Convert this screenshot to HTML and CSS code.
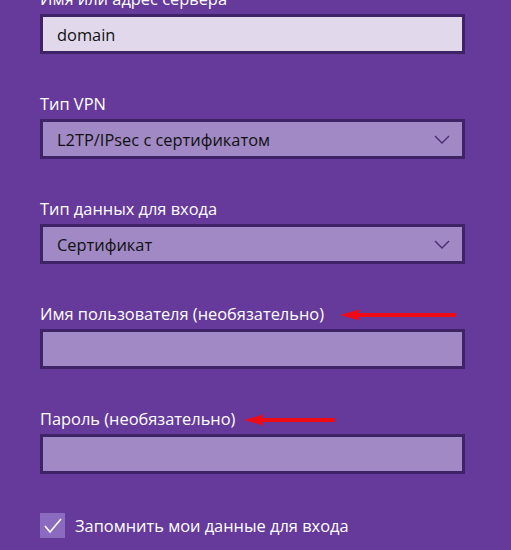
FILE: index.html
```html
<!DOCTYPE html>
<html lang="ru">

<head>
  <meta charset="UTF-8" />
  <meta name="viewport" content="width=device-width, initial-scale=1.0" />
  <title>Добавить VPN-подключение</title>
  <link rel="stylesheet" href="styles.css">
</head>

<body>
  <form class="vpn-form">
    <div class="field">
      <label class="label">Имя или адрес сервера</label>
      <div class="box box-light">domain</div>
    </div>

    <div class="field">
      <label class="label">Тип VPN</label>
      <div class="box box-select">
        <span>L2TP/IPsec с сертификатом</span>
        <svg class="chevron" width="16" height="9" viewBox="0 0 16 9">
          <path d="M1 1 L8 8 L15 1" fill="none" stroke="#4a2d72" stroke-width="1.4" />
        </svg>
      </div>
    </div>

    <div class="field">
      <label class="label">Тип данных для входа</label>
      <div class="box box-select">
        <span>Сертификат</span>
        <svg class="chevron" width="16" height="9" viewBox="0 0 16 9">
          <path d="M1 1 L8 8 L15 1" fill="none" stroke="#4a2d72" stroke-width="1.4" />
        </svg>
      </div>
    </div>

    <div class="field">
      <div class="label-row">
        <label class="label">Имя пользователя (необязательно)</label>
        <svg class="arrow" width="116" height="12" viewBox="0 0 116 12">
          <path d="M18 6 H115" stroke="#f00a14" stroke-width="4" stroke-linecap="round" />
          <path d="M0 6 L20 0.5 L17 6 L20 11.5 Z" fill="#f00a14" />
        </svg>
      </div>
      <div class="box box-select"></div>
    </div>

    <div class="field">
      <div class="label-row">
        <label class="label">Пароль (необязательно)</label>
        <svg class="arrow arrow-near" width="91" height="12" viewBox="0 0 91 12">
          <path d="M18 6 H90" stroke="#f00a14" stroke-width="4" stroke-linecap="round" />
          <path d="M0 6 L20 0.5 L17 6 L20 11.5 Z" fill="#f00a14" />
        </svg>
      </div>
      <div class="box box-select"></div>
    </div>

    <div class="remember">
      <span class="check">
        <svg width="25" height="25" viewBox="0 0 25 25">
          <path d="M5 13 L10 19 L21 6" fill="none" stroke="#fff" stroke-width="1.6" />
        </svg>
      </span>
      <span>Запомнить мои данные для входа</span>
    </div>
  </form>
</body>

</html>
```

FILE: styles.css
```css
* {
  box-sizing: border-box;
}

body {
  margin: 0;
  height: 100vh;
  overflow: hidden;
  background: #663a9a;
  font-family: "Segoe UI", "Open Sans", "Noto Sans", sans-serif;
  color: #fff;
}

.vpn-form {
  margin-top: -12px;
  padding-left: 40px;
  width: 465px;
}

.field {
  margin-bottom: 39px;
}

.label-row {
  display: flex;
  align-items: center;
  gap: 16px;
  height: 22px;
  margin-bottom: 4px;
}

.label-row .label {
  margin-bottom: 0;
}

.label {
  display: block;
  font-size: 16.4px;
  line-height: 22px;
  margin-bottom: 4px;
  white-space: nowrap;
}

.arrow {
  margin-top: 2px;
}

.arrow-near {
  margin-left: -7px;
}

.box {
  display: flex;
  align-items: center;
  justify-content: space-between;
  height: 40px;
  padding: 0 12px 0 14px;
  border: 3px solid #3e2467;
  font-size: 16.4px;
  color: #111;
}

.box-light {
  background: #e1d9eb;
}

.box-select {
  background: #a089c4;
}

.remember {
  display: flex;
  align-items: center;
  gap: 10px;
  font-size: 16.4px;
  margin-top: 12px;
}

.check {
  display: flex;
  width: 25px;
  height: 25px;
  background: #8b6bbf;
}
```
